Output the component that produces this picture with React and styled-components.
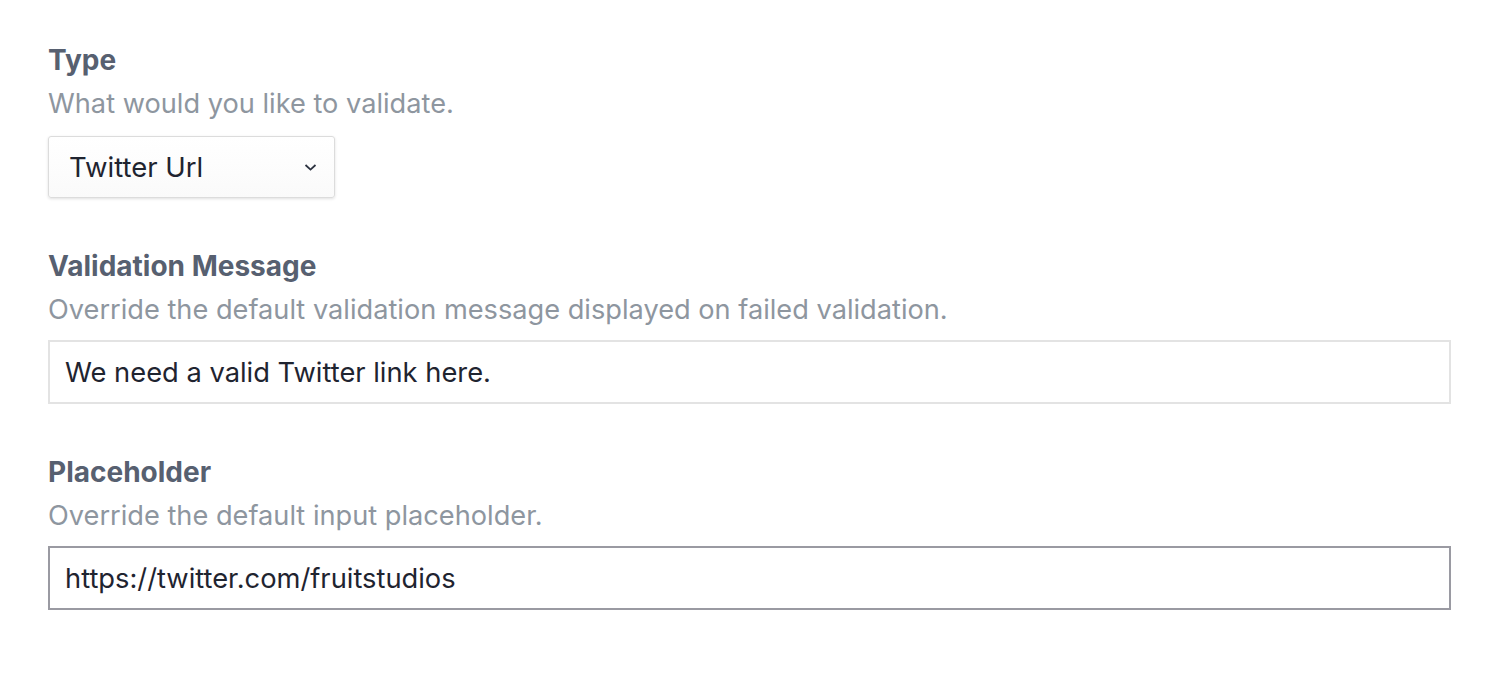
import React, { useState } from 'react';
import styled, { createGlobalStyle } from 'styled-components';

const GlobalStyle = createGlobalStyle`
    body {
        margin:0;
        background:white;
        font-family:Inter, "Noto Sans", sans-serif;
    }
`

const Page = styled.div`
    padding:38px 47px 40px 48px;
`

const Field = styled.div`
    display:flex;
    flex-direction:column;
    align-items:flex-start;
    margin-bottom:46px;
`

const Label = styled.label`
    font-size:28px;
    font-weight:700;
    line-height:44px;
    color:#576070;
`

const Hint = styled.p`
    margin:0;
    font-size:27.2px;
    line-height:44px;
    color:#8e969f;
`

const SelectBox = styled.div`
    margin-top:10px;
    width:287px;
    height:62px;
    box-sizing:border-box;
    border:1px solid #dcdcdc;
    border-radius:3px;
    background:linear-gradient(#ffffff, #fafafa);
    box-shadow:0 1px 3px rgba(0,0,0,0.12);
    display:flex;
    align-items:center;
    justify-content:space-between;
    padding:0 17px 0 20px;
    font-size:27.5px;
    color:#1f2430;
    svg {
        width:13px;
        height:9px;
    }
`

const TextInput = styled.input`
    margin-top:8px;
    width:100%;
    height:64px;
    box-sizing:border-box;
    border:2px solid ${props => props.focused ? '#9a9aa2' : '#e3e3e3'};
    border-radius:0;
    outline:none;
    padding:0 15px;
    font-family:inherit;
    font-size:27.3px;
    color:#1f2430;
    background:white;
`

const App = () => {
    const [message, setMessage] = useState('We need a valid Twitter link here.')
    const [placeholder, setPlaceholder] = useState('https://twitter.com/fruitstudios')

    return (
        <Page>
            <GlobalStyle/>
            <Field>
                <Label>Type</Label>
                <Hint>What would you like to validate.</Hint>
                <SelectBox>
                    <span>Twitter Url</span>
                    <svg viewBox="0 0 13 9" fill="none" stroke="#2c3240" strokeWidth="1.8">
                        <path d="M1.5 2l5 4.6 5-4.6"/>
                    </svg>
                </SelectBox>
            </Field>
            <Field>
                <Label>Validation Message</Label>
                <Hint>Override the default validation message displayed on failed validation.</Hint>
                <TextInput value={message} onChange={e => setMessage(e.target.value)}/>
            </Field>
            <Field>
                <Label>Placeholder</Label>
                <Hint>Override the default input placeholder.</Hint>
                <TextInput focused value={placeholder} onChange={e => setPlaceholder(e.target.value)}/>
            </Field>
        </Page>
    );
}

export default App;
